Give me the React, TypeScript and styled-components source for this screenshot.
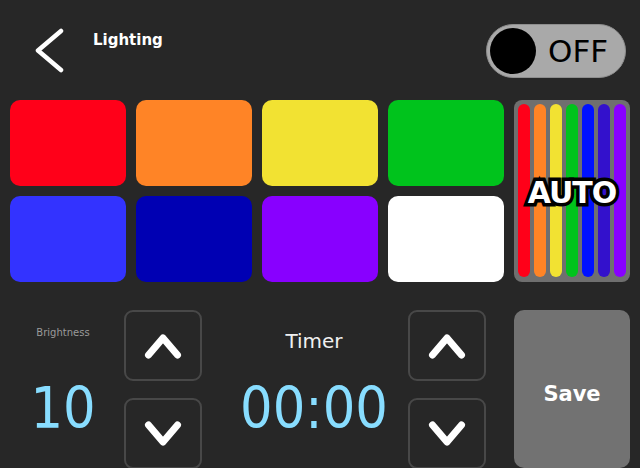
import React from 'react';
import styled, { createGlobalStyle } from 'styled-components';

const GlobalStyle = createGlobalStyle`
  html, body {
    margin: 0;
    padding: 0;
    background: #272727;
    overflow: hidden;
  }
  body {
    font-family: "DejaVu Sans", "Liberation Sans", sans-serif;
  }
`;

const swatches = [
  '#ff0019', '#ff8426', '#f2e232', '#00c31c',
  '#3333ff', '#0000b3', '#8800ff', '#ffffff',
];

const stripes = ['#ff0019', '#ff8426', '#f2e232', '#00c31c', '#0011ff', '#3311cc', '#8800ff'];

const Chevron = ({ up }: { up?: boolean }) => (
  <svg width="44" height="34" viewBox="0 0 44 34">
    <polyline
      points={up ? '7.5,26 22,9 36.5,26' : '7.5,8 22,25 36.5,8'}
      fill="none"
      stroke="#ffffff"
      strokeWidth="7"
      strokeLinecap="round"
      strokeLinejoin="round"
    />
  </svg>
);

const App = () => {
  return (
    <Screen>
      <GlobalStyle />
      <Header>
        <BackButton aria-label="Back">
          <svg width="32" height="46" viewBox="0 0 32 46">
            <polyline
              points="27,3 4,22.5 27,42"
              fill="none"
              stroke="#ffffff"
              strokeWidth="4.5"
              strokeLinecap="round"
              strokeLinejoin="round"
            />
          </svg>
        </BackButton>
        <Title>Lighting</Title>
        <Toggle>
          <Knob />
          <ToggleLabel>OFF</ToggleLabel>
        </Toggle>
      </Header>

      <Palette>
        {swatches.map((c) => (
          <Swatch key={c} $color={c} />
        ))}
        <AutoTile>
          {stripes.map((c) => (
            <Stripe key={c} $color={c} />
          ))}
          <AutoLabel>AUTO</AutoLabel>
        </AutoTile>
      </Palette>

      <Controls>
        <Readout $width={106} $left={0} $right={8}>
          <SmallLabel>Brightness</SmallLabel>
          <BigValue>10</BigValue>
        </Readout>
        <Stepper>
          <StepButton><Chevron up /></StepButton>
          <StepButton><Chevron /></StepButton>
        </Stepper>
        <Readout $width={188} $left={18} $right={0}>
          <TimerLabel>Timer</TimerLabel>
          <BigValue>00:00</BigValue>
        </Readout>
        <Stepper>
          <StepButton><Chevron up /></StepButton>
          <StepButton><Chevron /></StepButton>
        </Stepper>
        <SaveButton>Save</SaveButton>
      </Controls>
    </Screen>
  );
};

const Screen = styled.div`
  width: 640px;
  height: 468px;
  background: #272727;
  color: #fff;
`;

const Header = styled.div`
  display: flex;
  align-items: flex-start;
  height: 100px;
  padding: 0 14px 0 10px;
  box-sizing: border-box;
`;

const BackButton = styled.div`
  display: flex;
  margin: 28px 0 0 24px;
`;

const Title = styled.div`
  margin: 31px 0 0 27px;
  font-size: 15px;
  line-height: 18px;
  font-weight: bold;
`;

const Toggle = styled.div`
  margin: 24px 0 0 auto;
  width: 140px;
  height: 54px;
  box-sizing: border-box;
  border-radius: 27px;
  background: #a9a9a9;
  border: 1px solid #8e8e8e;
  display: flex;
  align-items: center;
  padding-left: 3px;
`;

const Knob = styled.div`
  width: 46px;
  height: 46px;
  border-radius: 50%;
  background: #000;
`;

const ToggleLabel = styled.span`
  margin-left: 12px;
  font-size: 31px;
  line-height: 1;
  color: #000;
`;

const Palette = styled.div`
  display: grid;
  grid-template-columns: repeat(5, 116px);
  grid-template-rows: 86px 86px;
  gap: 10px;
  padding: 0 10px;
`;

const Swatch = styled.div<{ $color: string }>`
  background: ${(p) => p.$color};
  border-radius: 10px;
`;

const AutoTile = styled.div`
  grid-column: 5;
  grid-row: 1 / 3;
  position: relative;
  background: #6f6f6f;
  border-radius: 8px;
  display: flex;
  gap: 4px;
  padding: 4px 4px 5px;
`;

const Stripe = styled.div<{ $color: string }>`
  flex: 1;
  background: ${(p) => p.$color};
  border-radius: 6px;
`;

const AutoLabel = styled.span`
  position: absolute;
  inset: 0;
  display: flex;
  align-items: center;
  justify-content: center;
  font-size: 30px;
  font-weight: bold;
  color: #fff;
  -webkit-text-stroke: 7px #000;
  paint-order: stroke fill;
  letter-spacing: -1px;
  padding-top: 3px;
`;

const Controls = styled.div`
  display: flex;
  margin-top: 28px;
  padding: 0 10px;
  height: 160px;
`;

const Readout = styled.div<{ $width: number; $left: number; $right: number }>`
  width: ${(p) => p.$width}px;
  margin-left: ${(p) => p.$left}px;
  margin-right: ${(p) => p.$right}px;
  display: flex;
  flex-direction: column;
  align-items: center;
`;

const SmallLabel = styled.div`
  margin-top: 17px;
  font-size: 10px;
  line-height: 12px;
  color: #9a9a9a;
`;

const TimerLabel = styled.div`
  margin-top: 19px;
  font-size: 20px;
  line-height: 24px;
  color: #f0f0f0;
`;

const BigValue = styled.div`
  margin-top: auto;
  margin-bottom: 32px;
  font-family: "DejaVu Sans Condensed", "DejaVu Sans", sans-serif;
  font-stretch: condensed;
  font-size: 57px;
  line-height: 60px;
  color: #88ddff;
`;

const Stepper = styled.div`
  display: flex;
  flex-direction: column;
  gap: 17px;
`;

const StepButton = styled.div`
  width: 78px;
  height: 71px;
  box-sizing: border-box;
  border: 2px solid #484848;
  border-radius: 9px;
  display: flex;
  align-items: center;
  justify-content: center;
`;

const SaveButton = styled.div`
  margin-left: 28px;
  width: 116px;
  height: 158px;
  border-radius: 10px;
  background: #727272;
  display: flex;
  align-items: center;
  justify-content: center;
  font-size: 21px;
  font-weight: bold;
  padding-top: 10px;
  box-sizing: border-box;
`;

export default App;
